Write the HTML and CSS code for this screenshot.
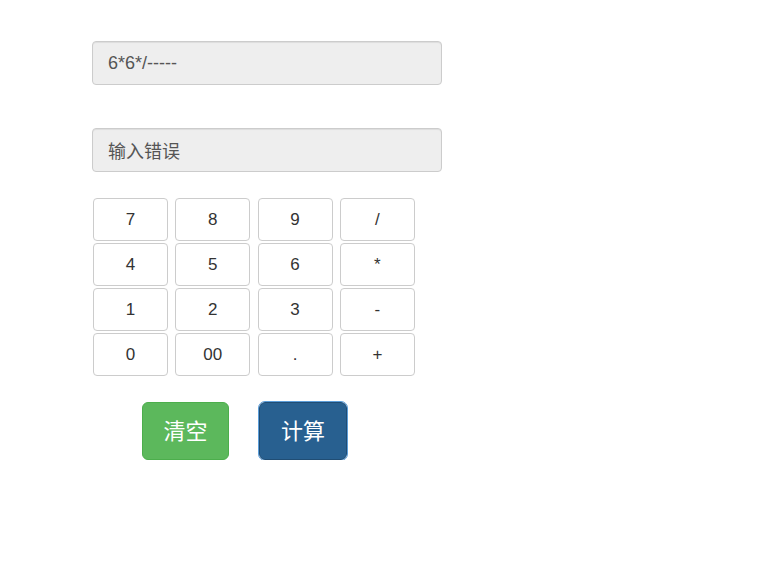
FILE: index.html
```html
<!DOCTYPE html>
<html lang="zh-CN">
<head>
  <meta charset="UTF-8" />
  <title>计算器</title>
  <link rel="stylesheet" href="styles.css">
</head>
<body>
  <div class="calc">
    <input type="text" class="screen" id="expr" value="6*6*/-----" readonly />
    <input type="text" class="screen result" id="result" value="输入错误" readonly />

    <div class="keys">
      <button>7</button>
      <button>8</button>
      <button>9</button>
      <button>/</button>
      <button>4</button>
      <button>5</button>
      <button>6</button>
      <button>*</button>
      <button>1</button>
      <button>2</button>
      <button>3</button>
      <button>-</button>
      <button>0</button>
      <button>00</button>
      <button>.</button>
      <button>+</button>
    </div>

    <div class="actions">
      <button class="btn btn-clear">清空</button>
      <button class="btn btn-calc">计算</button>
    </div>
  </div>
</body>
</html>
```

FILE: styles.css
```css
body {
  margin: 0;
  background: #fff;
  font-family: "Liberation Sans", Arial, "Noto Sans CJK SC", sans-serif;
  color: #333;
}

.calc {
  padding: 41px 0 0 92px;
}

.screen {
  display: block;
  width: 350px;
  height: 44px;
  padding: 0 15px;
  box-sizing: border-box;
  font-family: "Liberation Sans", Arial, "Noto Sans CJK SC", sans-serif;
  font-size: 18px;
  color: #555;
  background-color: #eee;
  border: 1px solid #ccc;
  border-radius: 4px;
  box-shadow: inset 0 1px 1px rgba(0,0,0,0.075);
  outline: none;
}

.screen.result {
  margin-top: 43px;
}

.keys {
  display: grid;
  grid-template-columns: repeat(4, 75px);
  grid-auto-rows: 43px;
  column-gap: 7.3px;
  row-gap: 2px;
  margin: 26px 0 0 1px;
}

.keys button {
  font-family: "Liberation Sans", Arial, sans-serif;
  font-size: 17px;
  color: #333;
  background: #fff;
  border: 1px solid #ccc;
  border-radius: 4px;
  padding: 0;
  cursor: pointer;
}

.actions {
  display: flex;
  align-items: flex-start;
  gap: 30px;
  margin: 26px 0 0 50px;
}

.btn {
  height: 58px;
  padding: 0 0 5px;
  line-height: 1;
  font-family: "Noto Sans CJK SC", sans-serif;
  font-size: 22px;
  color: #fff;
  border: 1px solid transparent;
  border-radius: 6px;
  cursor: pointer;
}

.btn-clear {
  width: 87px;
  background-color: #5cb85c;
  border-color: #4cae4c;
}

.btn-calc {
  width: 88px;
  background-color: #286090;
  border-color: #204d74;
  outline: 1px solid #5b9dd9;
}
```
